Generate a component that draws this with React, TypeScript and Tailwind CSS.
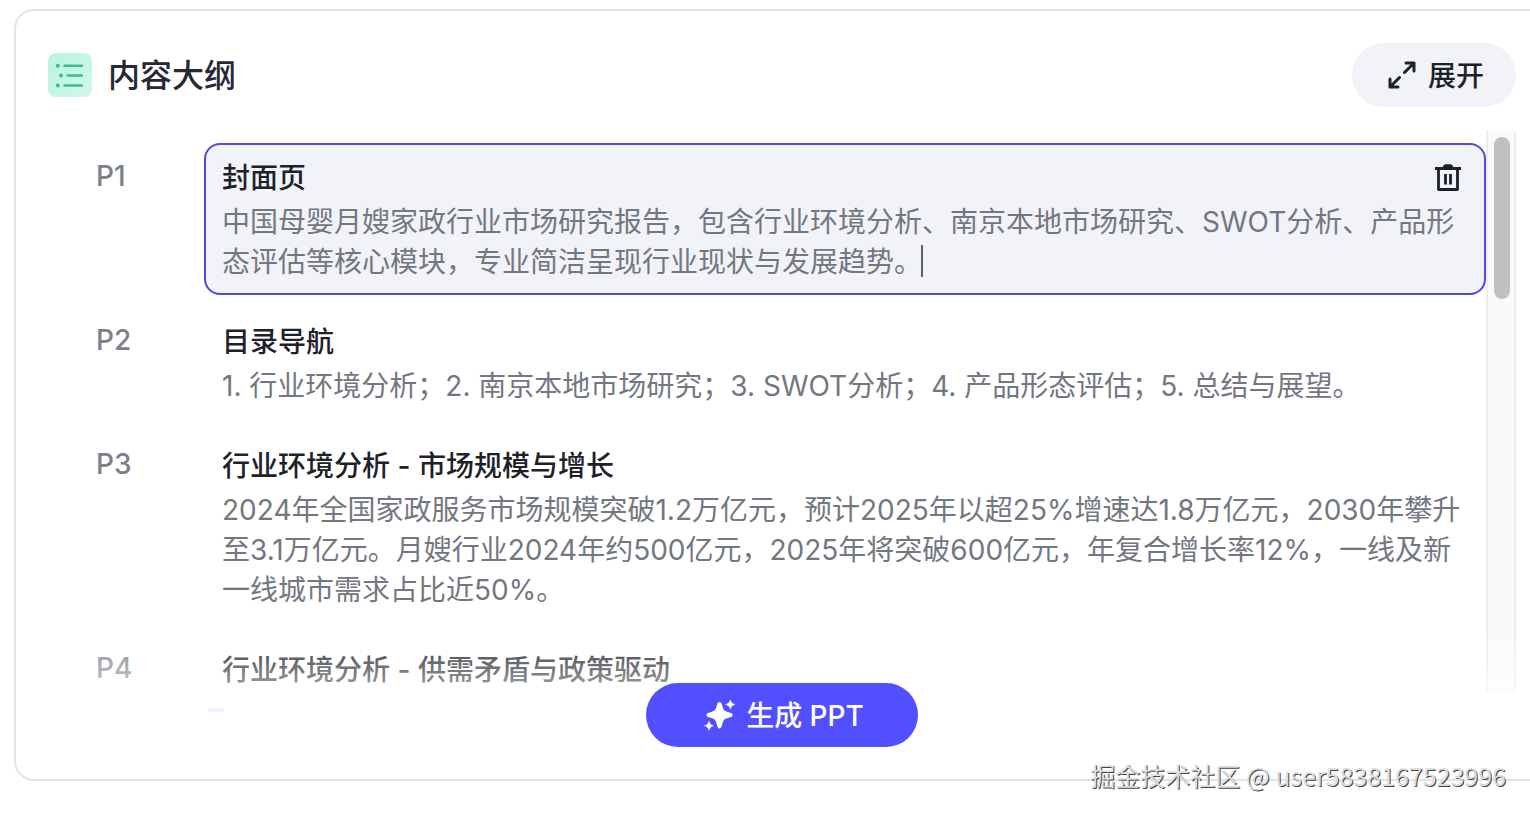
import { useState } from "react";

type Page = { title: string; body: string };

const pages: Page[] = [
  {
    title: "封面页",
    body: "中国母婴月嫂家政行业市场研究报告，包含行业环境分析、南京本地市场研究、SWOT分析、产品形态评估等核心模块，专业简洁呈现行业现状与发展趋势。",
  },
  {
    title: "目录导航",
    body: "1. 行业环境分析；2. 南京本地市场研究；3. SWOT分析；4. 产品形态评估；5. 总结与展望。",
  },
  {
    title: "行业环境分析 - 市场规模与增长",
    body: "2024年全国家政服务市场规模突破1.2万亿元，预计2025年以超25%增速达1.8万亿元，2030年攀升至3.1万亿元。月嫂行业2024年约500亿元，2025年将突破600亿元，年复合增长率12%，一线及新一线城市需求占比近50%。",
  },
  { title: "行业环境分析 - 供需矛盾与政策驱动", body: "" },
];

function OutlineIcon() {
  return (
    <svg viewBox="0 0 44 44" className="size-11" aria-hidden="true">
      <defs>
        <linearGradient id="outline-bg" x1="0" y1="0" x2="1" y2="1">
          <stop offset="0" stopColor="#b8f4e0" />
          <stop offset="1" stopColor="#d2f7ec" />
        </linearGradient>
      </defs>
      <rect width="44" height="44" rx="8" fill="url(#outline-bg)" />
      <g stroke="#3cbb93" strokeWidth="2.4" strokeLinecap="round">
        <path d="M16.500 12.800H34M19.500 22.500H34M16.500 32.500H34" />
      </g>
      <g fill="#3cbb93">
        <circle cx="9.800" cy="12.800" r="2" />
        <circle cx="13" cy="22.500" r="2" />
        <circle cx="9.800" cy="32.500" r="2" />
      </g>
    </svg>
  );
}

function ExpandIcon() {
  return (
    <svg viewBox="0 0 28 28" className="size-7" fill="none" stroke="#1d2129" strokeWidth="3" strokeLinecap="round" strokeLinejoin="round" aria-hidden="true">
      <path d="M18 2H26V10M26 2L16.500 11.500M10 26H2V18M2 26L11.500 16.500" />
    </svg>
  );
}

function TrashIcon() {
  return (
    <svg viewBox="0 0 28 28" className="size-7" fill="none" stroke="#1d2129" strokeWidth="2.8" strokeLinejoin="round" aria-hidden="true">
      <path d="M1 4.500H27M4.500 4.500V25.500H23.500V4.500M11.500 10V20.500M16.500 10V20.500" />
      <path d="M8.500 4.500Q9 .2 12 .2H16Q19 .2 19.500 4.500Z" fill="#1d2129" stroke="none" />
    </svg>
  );
}

function SparkleIcon() {
  return (
    <svg viewBox="0 0 32 32" className="size-8" fill="#fff" aria-hidden="true">
      <path d="M15.500 3C17 3 17.700 4.300 18.300 7C19.300 11 20.500 12.200 24.500 13.200C27.400 13.900 28.600 14.500 28.600 16C28.600 17.500 27.400 18.100 24.500 18.800C20.500 19.800 19.300 21 18.300 25C17.600 28 17 29.500 15.500 29.500C14 29.500 13.400 28 12.700 25C11.700 21 10.500 19.800 6.500 18.800C3.600 18.100 2.400 17.500 2.400 16C2.400 14.500 3.600 13.900 6.500 13.200C10.500 12.200 11.700 11 12.700 7C13.300 4.300 14 3 15.500 3Z" />
      <path d="M26.300 1Q27 4.600 31 5.500Q27 6.400 26.300 10Q25.600 6.400 21.600 5.500Q25.600 4.600 26.300 1ZM5 22.300Q5.700 26 9.500 26.800Q5.700 27.600 5 31.300Q4.300 27.600 .5 26.800Q4.300 26 5 22.300Z" stroke="#fff" strokeWidth=".5" />
    </svg>
  );
}

function EditingPage({ page }: { page: Page }) {
  const [title, setTitle] = useState(page.title);
  const [body, setBody] = useState(page.body);
  return (
    <div className="relative min-w-0 flex-1 rounded-2xl border-2 border-[#5149e0] bg-[#f1f3f8] px-4 pb-[11px] pt-[13px]">
      <div className="flex h-10 items-center justify-between pr-1.5">
        <input
          aria-label="页面标题"
          value={title}
          onChange={(e) => setTitle(e.target.value)}
          className="h-10 min-w-0 flex-1 bg-transparent font-medium text-[#1d2129] outline-none"
        />
        <button type="button" aria-label="删除页面">
          <TrashIcon />
        </button>
      </div>
      <textarea
        aria-label="页面内容"
        rows={2}
        value={body}
        onChange={(e) => setBody(e.target.value)}
        className="mt-1 block w-full resize-none overflow-hidden bg-transparent leading-10 text-[#737780] outline-none"
      />
      <span className="absolute bottom-4 left-[715px] h-8 w-0.5 bg-[#5c616d]" />
    </div>
  );
}

function StaticPage({ page }: { page: Page }) {
  return (
    <div className="min-w-0 flex-1 rounded-2xl border-2 border-transparent px-4 pb-[11px] pt-[13px]">
      <h2 className="h-10 font-medium leading-10 text-[#1d2129]">{page.title}</h2>
      <p className="mt-1 leading-10 text-[#737780]">{page.body}</p>
    </div>
  );
}

export default function App() {
  return (
    <main className="min-h-screen overflow-hidden bg-white pl-3.5 pt-[9px] font-['Inter','Noto_Sans_CJK_SC',sans-serif] text-[28px]">
      <section className="rounded-l-[20px] border-2 border-r-0 border-[#e1e3e8] pb-8 pl-8 pr-3.5 pt-8">
        <header className="flex items-center justify-between">
          <div className="flex items-center gap-4">
            <OutlineIcon />
            <h1 className="pt-0.5 text-[32px] font-medium leading-10 text-[#262933]">内容大纲</h1>
          </div>
          <button type="button" className="flex h-16 items-center gap-3 rounded-full bg-[#f1f3f8] pl-9 pr-8 font-medium text-[#1d2129]">
            <ExpandIcon />
            <span className="pt-0.5">展开</span>
          </button>
        </header>

        <div className="relative mt-6 flex h-[561px] overflow-hidden">
          <ol className="flex min-w-0 flex-1 flex-col gap-3 pl-12 pt-3">
            {pages.map((page, i) => (
              <li key={page.title} className="flex">
                <span className="w-[108px] shrink-0 pt-[13px] font-medium leading-10 text-[#7c808a]">P{i + 1}</span>
                {i === 0 ? <EditingPage page={page} /> : <StaticPage page={page} />}
              </li>
            ))}
          </ol>
          <div className="w-[30px] shrink-0 border-x-2 border-[#ededed] bg-[#fafafa] pl-1.5 pt-1.5">
            <div className="h-[162px] w-4 rounded-full bg-[#c1c1c1]" />
          </div>
          <div className="pointer-events-none absolute inset-x-0 bottom-0 h-16 bg-linear-to-b from-white/0 to-white/60" />
        </div>

        <div className="relative -mt-[9px] flex justify-center">
          <span className="absolute left-40 top-[25px] h-1 w-4 rounded-t-full bg-[#f0effc]" />
          <button type="button" className="flex h-16 w-[272px] items-center justify-center gap-2.5 rounded-full bg-[#524fff] pl-1 font-medium text-white">
            <SparkleIcon />
            <span className="pt-0.5">生成 PPT</span>
          </button>
        </div>
      </section>
      <p className="relative -mt-[26px] pr-6 text-right font-['Noto_Sans_CJK_SC',sans-serif] text-[25px] leading-10 text-[#dedede] [text-shadow:1px_1px_0_#444]">
        掘金技术社区 @ user5838167523996
      </p>
    </main>
  );
}
